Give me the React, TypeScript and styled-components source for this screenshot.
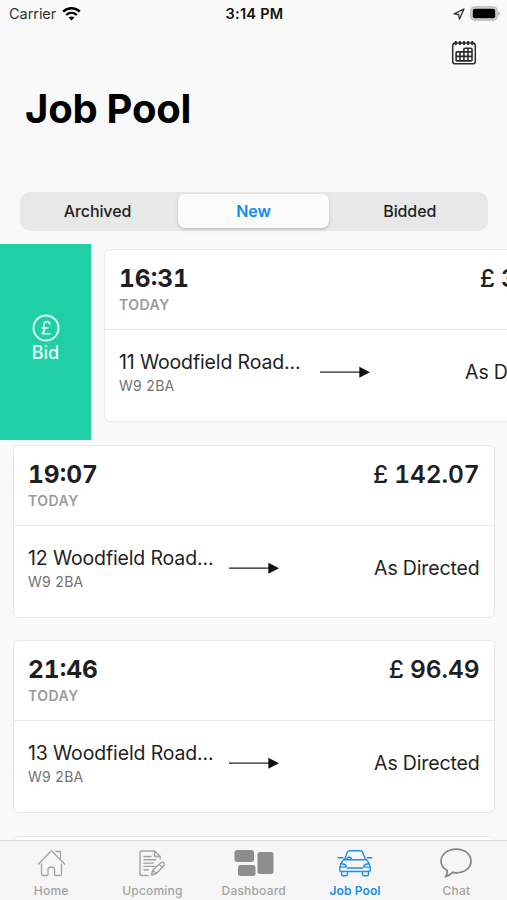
import React from "react";
import styled, { createGlobalStyle, css } from "styled-components";

const GlobalStyle = createGlobalStyle`
  *, *::before, *::after { box-sizing: border-box; }
  body { margin: 0; background: #f9f9f9; }
`;

const Screen = styled.div`
  width: 507px;
  height: 900px;
  display: flex;
  flex-direction: column;
  overflow: hidden;
  background: #f9f9f9;
  color: #1f1f1f;
  font-family: Inter, "Liberation Sans", sans-serif;
`;

const StatusBar = styled.div`
  flex: none;
  height: 27px;
  display: grid;
  grid-template-columns: 1fr auto 1fr;
  align-items: center;
  padding: 0 6px 0 8px;
  font-size: 14.5px;
  color: #111;
`;

const StatusGroup = styled.div<{ $end?: boolean }>`
  display: flex;
  align-items: center;
  gap: 5.5px;
  justify-content: ${(p) => (p.$end ? "flex-end" : "flex-start")};
  svg { display: block; }
`;

const Carrier = styled.span`
  padding-left: 1px;
  letter-spacing: -0.05px;
  color: #333;
`;

const Clock = styled.span`
  font-weight: 600;
  letter-spacing: 0.25px;
`;

const NavBar = styled.div`
  flex: none;
  height: 50px;
  display: flex;
  justify-content: flex-end;
  padding: 13px 30px 0 0;
`;

const Title = styled.h1`
  flex: none;
  margin: 0;
  height: 115px;
  padding: 8px 0 0 25px;
  font-size: 40px;
  line-height: 48px;
  font-weight: 700;
  letter-spacing: -0.25px;
  color: #000;
`;

const Segmented = styled.div`
  flex: none;
  height: 39px;
  margin: 0 19.5px 13px 20px;
  padding: 2px 0 2px 2px;
  display: grid;
  grid-template-columns: 151px 5px 151px 3px 1fr;
  border-radius: 10px;
  background: #e8e8e8;
`;

const Segment = styled.button<{ $selected?: boolean; $column: number }>`
  grid-column: ${(p) => p.$column};
  border: 0;
  padding: 0 0 1px;
  height: 34px;
  border-radius: 7px;
  background: transparent;
  font: 500 16px/20px Inter, sans-serif;
  letter-spacing: -0.1px;
  color: #1f1f1f;
  ${(p) =>
    p.$selected &&
    css`
      background: #fbfbfb;
      color: #1289f0;
      font-weight: 600;
      box-shadow: 0 1px 2px rgba(0, 0, 0, 0.15), 0 2px 5px rgba(0, 0, 0, 0.08);
    `}
`;

const JobList = styled.div`
  flex: 1;
  min-height: 0;
  overflow: hidden;
`;

const JobRow = styled.div`
  display: flex;
  height: 195.5px;
  overflow: hidden;
`;

const BidAction = styled.button`
  flex: none;
  width: 91px;
  border: 0;
  padding: 0 0 5px;
  display: flex;
  flex-direction: column;
  align-items: center;
  justify-content: center;
  gap: 0;
  background: #20cfa5;
  color: #eafff8;
  font: 500 18px/22px Inter, sans-serif;
  svg { display: block; }
`;

const Card = styled.article`
  flex: none;
  width: 481.5px;
  height: 173px;
  margin: 5px 0 0 13px;
  border: 1px solid #e6e7e8;
  border-radius: 6px;
  background: #fff;
`;

const CardHeader = styled.div`
  height: 80px;
  display: flex;
  justify-content: space-between;
  align-items: flex-start;
  padding: 13px 14px 0 14px;
  border-bottom: 1px solid #e6e7e8;
`;

const Time = styled.div`
  font-size: 24.5px;
  line-height: 31px;
  font-weight: 650;
  letter-spacing: 0;
  font-variant-numeric: tabular-nums;
`;

const Day = styled.div`
  margin-top: 1px;
  font-size: 14px;
  line-height: 20px;
  font-weight: 600;
  letter-spacing: 0.5px;
  color: #9b9b9b;
`;

const Price = styled.div`
  font-size: 24.5px;
  line-height: 31px;
  font-weight: 620;
  letter-spacing: -0.1px;
  font-variant-numeric: tabular-nums;
`;

const Pound = styled.span`
  font-weight: 500;
  letter-spacing: -0.5px;
`;

const Route = styled.div`
  height: 91px;
  display: grid;
  grid-template-columns: 201px 50px 1fr;
  padding: 0 14px 0 14px;
`;

const Address = styled.div`
  padding-top: 19px;
  white-space: nowrap;
  font-size: 19.5px;
  line-height: 26px;
  letter-spacing: -0.14px;
`;

const Postcode = styled.div`
  font-size: 14px;
  line-height: 22px;
  letter-spacing: 0.3px;
  color: #727272;
`;

const ArrowCell = styled.div`
  padding-top: 36px;
  svg { display: block; }
`;

const Destination = styled.div`
  padding-top: 29px;
  text-align: right;
  font-size: 19.5px;
  line-height: 26px;
  letter-spacing: -0.15px;
`;

const TabBar = styled.nav`
  flex: none;
  height: 60px;
  display: grid;
  grid-template-columns: repeat(5, 1fr);
  padding-left: 0.5px;
  border-top: 1px solid #dcdcdc;
  background: #f6f6f6;
`;

const Tab = styled.div<{ $active?: boolean }>`
  display: flex;
  flex-direction: column;
  align-items: center;
  padding-top: 4px;
  font-size: 12px;
  line-height: 16px;
  font-weight: ${(p) => (p.$active ? 600 : 500)};
  letter-spacing: ${(p) => (p.$active ? 0.1 : 0.2)}px;
  color: ${(p) => (p.$active ? "#1d8eea" : "#a3a3a3")};
  svg { display: block; margin-bottom: 2px; }
`;

const WifiIcon = () => (
  <svg width="19" height="14" viewBox="0 0 19 14" fill="none" stroke="#000">
    <path d="M1.2 4.7C6 .2 13 .2 17.8 4.7" strokeWidth="2.5" />
    <path d="M4.2 8C7.3 5.1 11.7 5.1 14.8 8" strokeWidth="2.3" />
    <path d="M9.5 13.6 6.6 10.5Q9.5 8.3 12.4 10.5Z" fill="#000" stroke="none" />
  </svg>
);

const LocationIcon = () => (
  <svg width="12" height="12" viewBox="0 0 12 12" fill="none" stroke="#333" strokeWidth="1.3" strokeLinejoin="round">
    <path d="M11 1 1 5.8l4.600.7L6.500 11Z" />
  </svg>
);

const BatteryIcon = () => (
  <svg width="31" height="15" viewBox="0 0 31 15">
    <rect x="0.8" y="0.8" width="26.4" height="13.4" rx="4" fill="#d6d6d6" stroke="#b8b8b8" strokeWidth="1.2" />
    <rect x="2.8" y="2.8" width="22.4" height="9.4" rx="2" fill="#000" />
    <path d="M28.3 5.2q1.8.8 1.8 2.3t-1.8 2.3Z" fill="#b0b0b0" />
  </svg>
);

const CalendarIcon = () => (
  <svg width="26" height="26" viewBox="0 0 26 26" fill="none" stroke="#2b2b2b">
    <rect x="1.7" y="3" width="22.6" height="20.8" rx="2.6" strokeWidth="1.5" />
    <path d="M4.8 1v4M8.9 1v4M13 1v4M17.1 1v4M21.2 1v4" strokeWidth="1.9" />
    <path
      d="M12.9 11.9V9.3q0-1 1-1h6.1q1 0 1 1v10.6q0 1-1 1H6.1q-1 0-1-1v-7q0-1 1-1h15M5.1 16.4H21M9 11.9v9M12.9 11.9v9M17 8.4v12.5"
      strokeWidth="1.6"
    />
  </svg>
);

const PoundIcon = () => (
  <svg width="28" height="28" viewBox="0 0 28 28" fill="none" stroke="#eafff8">
    <circle cx="14" cy="14" r="12.5" strokeWidth="1.9" />
    <path d="M18 10.500c-.4-2-1.500-2.900-3.100-2.900-2.200 0-3.400 1.600-3.100 3.900l.5 3.200c.3 2.300-.4 3.900-2.500 5H18.500M9.600 14h6.900" strokeWidth="1.6" />
  </svg>
);

const ArrowIcon = () => (
  <svg width="50" height="12" viewBox="0 0 50 12">
    <path d="M0 6.2H40" stroke="#222" strokeWidth="1.3" />
    <path d="M39.3 .7 50 6.2 39.3 11.7Z" fill="#111" />
  </svg>
);

const HomeIcon = () => (
  <svg width="28" height="36" viewBox="1 0 28 36" fill="none" stroke="currentColor" strokeWidth="1.3" strokeLinecap="round" strokeLinejoin="round">
    <path d="M2.5 19 14.8 6.3q.7-.7 1.4 0L28.5 19M20 6.5h4.5V14.5" />
    <path d="M5.500 19v10q0 1.500 1.500 1.500H11q1 0 1-1V25q0-3 3.300-3t3.300 3v4.500q0 1 1 1H24q1.500 0 1.500-1.500V19" />
  </svg>
);

const UpcomingIcon = () => (
  <svg width="28" height="36" viewBox="0 0 28 36" fill="none" stroke="currentColor" strokeWidth="1.4" strokeLinejoin="round" strokeLinecap="round">
    <path d="M10 30.500H3.500q-1.500 0-1.500-1.500V7.500Q2 6 3.500 6h13.200l5.500 5.500V14M16.700 6v5.500h5.500" />
    <path d="M6 11.500h7M6 14.800h11.500M6 18.100h9.500M6 21.400h11M6 24.700h4" />
    <path d="m13.500 30 1.200-4.800 8.400-7.600q1.300-1 2.600.3t.2 2.700l-7.600 7.900ZM21.300 19.400l3 3M14.700 25.200l3.500 3.300" />
  </svg>
);

const DashboardIcon = () => (
  <svg width="40" height="36" viewBox="0 0 40 36" fill="#8d8d8d">
    <rect x="0.5" y="5" width="19.5" height="12" rx="2.5" />
    <rect x="4" y="20" width="17.5" height="11" rx="2.5" />
    <rect x="23.5" y="7" width="16" height="22" rx="2.5" />
  </svg>
);

const CarIcon = () => (
  <svg width="36" height="36" viewBox="0 0 36 36" fill="none" stroke="currentColor" strokeWidth="1.4" strokeLinejoin="round" strokeLinecap="round">
    <path d="M7.500 14.500 10.500 7q.6-1.300 2-1.300h11q1.400 0 2 1.300l3 7.500M1.300 12.800H6M34.700 12.800H30" />
    <path d="M6.500 14.700h23q3.500 3.800 3.700 7.300v3.200q0 1.300-1.300 1.300H4.100q-1.300 0-1.300-1.300V22q.2-3.500 3.700-7.300ZM9.500 14.500q.8-2.500 2.600-2.500t2.700 2.500" />
    <path d="M4 18.800q4 0 5.300 2.500-.6.800-1.500.8H3M32 18.800q-4 0-5.300 2.500.6.800 1.500.8H33M10 23h16" />
    <path d="M4.500 26.500v2.300q0 2 1.700 2h2.600q1.700 0 1.700-2v-2.300M25.500 26.500v2.300q0 2 1.700 2h2.600q1.700 0 1.700-2v-2.300" />
  </svg>
);

const ChatIcon = () => (
  <svg width="34" height="36" viewBox="0 0 34 36" fill="none" stroke="#858585" strokeWidth="1.7" strokeLinejoin="round">
    <path d="M17.200 4.200c8.600 0 14.800 5 14.800 11.800s-6.200 11.800-14.600 11.800c-1.500 0-2.700-.1-4-.4-1.800 2.200-4 3.600-7 4.300 1.500-1.800 2-3.500 1.900-6C4.200 23.300 2 20 2 16 2 9.200 8.600 4.200 17.200 4.200Z" />
  </svg>
);

const tabs = [
  { label: "Home", Icon: HomeIcon },
  { label: "Upcoming", Icon: UpcomingIcon },
  { label: "Dashboard", Icon: DashboardIcon },
  { label: "Job Pool", Icon: CarIcon, active: true },
  { label: "Chat", Icon: ChatIcon },
];

const jobs = [
  { time: "16:31", price: "38.20", address: "11 Woodfield Road...", swiped: true },
  { time: "19:07", price: "142.07", address: "12 Woodfield Road..." },
  { time: "21:46", price: "96.49", address: "13 Woodfield Road..." },
];

export default function App() {
  return (
    <>
      <GlobalStyle />
      <Screen>
        <StatusBar>
          <StatusGroup>
            <Carrier>Carrier</Carrier>
            <WifiIcon />
          </StatusGroup>
          <Clock>3:14 PM</Clock>
          <StatusGroup $end>
            <LocationIcon />
            <BatteryIcon />
          </StatusGroup>
        </StatusBar>
        <NavBar>
          <CalendarIcon />
        </NavBar>
        <Title>Job Pool</Title>
        <Segmented>
          <Segment $column={1}>Archived</Segment>
          <Segment $column={3} $selected>New</Segment>
          <Segment $column={5}>Bidded</Segment>
        </Segmented>
        <JobList>
          {jobs.map((job) => (
            <JobRow key={job.time}>
              {job.swiped && (
                <BidAction>
                  <PoundIcon />
                  Bid
                </BidAction>
              )}
              <Card>
                <CardHeader>
                  <div>
                    <Time>{job.time}</Time>
                    <Day>TODAY</Day>
                  </div>
                  <Price>
                    <Pound>£</Pound> {job.price}
                  </Price>
                </CardHeader>
                <Route>
                  <Address>
                    {job.address}
                    <Postcode>W9 2BA</Postcode>
                  </Address>
                  <ArrowCell>
                    <ArrowIcon />
                  </ArrowCell>
                  <Destination>As Directed</Destination>
                </Route>
              </Card>
            </JobRow>
          ))}
          <JobRow>
            <Card />
          </JobRow>
        </JobList>
        <TabBar>
          {tabs.map(({ label, Icon, active }) => (
            <Tab key={label} $active={active}>
              <Icon />
              {label}
            </Tab>
          ))}
        </TabBar>
      </Screen>
    </>
  );
}
